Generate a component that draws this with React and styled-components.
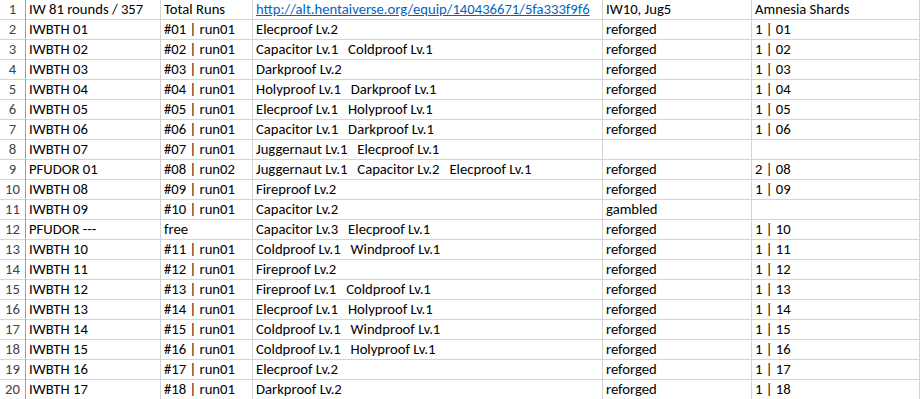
import React from "react";
import styled, { createGlobalStyle } from "styled-components";

const GlobalStyle = createGlobalStyle`
  html, body {
    margin: 0;
    padding: 0;
    background: #ffffff;
  }
  body {
    font-family: Carlito, Lato, "Open Sans", sans-serif;
    font-size: 14.67px;
    color: #000000;
  }
`;

const rows = [
  ["IW 81 rounds / 357", "Total Runs", null, "IW10, Jug5", "Amnesia Shards"],
  ["IWBTH 01", "#01 | run01", "Elecproof Lv.2", "reforged", "1 | 01"],
  ["IWBTH 02", "#02 | run01", "Capacitor Lv.1   Coldproof Lv.1", "reforged", "1 | 02"],
  ["IWBTH 03", "#03 | run01", "Darkproof Lv.2", "reforged", "1 | 03"],
  ["IWBTH 04", "#04 | run01", "Holyproof Lv.1   Darkproof Lv.1", "reforged", "1 | 04"],
  ["IWBTH 05", "#05 | run01", "Elecproof Lv.1   Holyproof Lv.1", "reforged", "1 | 05"],
  ["IWBTH 06", "#06 | run01", "Capacitor Lv.1   Darkproof Lv.1", "reforged", "1 | 06"],
  ["IWBTH 07", "#07 | run01", "Juggernaut Lv.1   Elecproof Lv.1", "", ""],
  ["PFUDOR 01", "#08 | run02", "Juggernaut Lv.1   Capacitor Lv.2   Elecproof Lv.1", "reforged", "2 | 08"],
  ["IWBTH 08", "#09 | run01", "Fireproof Lv.2", "reforged", "1 | 09"],
  ["IWBTH 09", "#10 | run01", "Capacitor Lv.2", "gambled", ""],
  ["PFUDOR ---", "free", "Capacitor Lv.3   Elecproof Lv.1", "reforged", "1 | 10"],
  ["IWBTH 10", "#11 | run01", "Coldproof Lv.1   Windproof Lv.1", "reforged", "1 | 11"],
  ["IWBTH 11", "#12 | run01", "Fireproof Lv.2", "reforged", "1 | 12"],
  ["IWBTH 12", "#13 | run01", "Fireproof Lv.1   Coldproof Lv.1", "reforged", "1 | 13"],
  ["IWBTH 13", "#14 | run01", "Elecproof Lv.1   Holyproof Lv.1", "reforged", "1 | 14"],
  ["IWBTH 14", "#15 | run01", "Coldproof Lv.1   Windproof Lv.1", "reforged", "1 | 15"],
  ["IWBTH 15", "#16 | run01", "Coldproof Lv.1   Holyproof Lv.1", "reforged", "1 | 16"],
  ["IWBTH 16", "#17 | run01", "Elecproof Lv.2", "reforged", "1 | 17"],
  ["IWBTH 17", "#18 | run01", "Darkproof Lv.2", "reforged", "1 | 18"],
];

const LINK = "http://alt.hentaiverse.org/equip/140436671/5fa333f9f6";

const App = () => {
  return (
    <>
      <GlobalStyle />
      <Sheet>
        {rows.map((row, i) => (
          <React.Fragment key={i}>
            <RowNum>{i + 1}</RowNum>
            {row.map((value, j) => (
              <Cell key={j}>
                {value === null ? <Link href="#">{LINK}</Link> : value}
              </Cell>
            ))}
          </React.Fragment>
        ))}
      </Sheet>
    </>
  );
};

export default App;

const Sheet = styled.div`
  display: grid;
  grid-template-columns: 26px 135px 92px 350px 149px 1fr;
  grid-auto-rows: 20px;
  width: 920px;
  overflow: hidden;
`;

const Cell = styled.div`
  box-sizing: border-box;
  display: flex;
  align-items: flex-end;
  padding: 0 2px 1px 3px;
  border-right: 1px solid #d4d4d4;
  border-bottom: 1px solid #d4d4d4;
  white-space: pre;
  overflow: hidden;
  line-height: 18px;
`;

const RowNum = styled(Cell)`
  justify-content: center;
  padding: 0 0 1px 0;
  color: #444444;
  border-right-color: #9e9e9e;
`;

const Link = styled.a`
  color: #0563c1;
  text-decoration: underline;
`;
